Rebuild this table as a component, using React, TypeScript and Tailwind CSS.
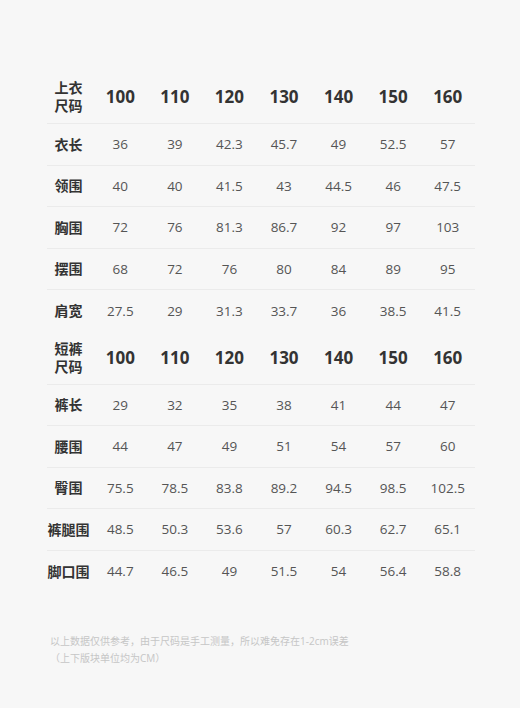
const sizes = ['100', '110', '120', '130', '140', '150', '160']

const topRows: [string, string[]][] = [
    ['衣长', ['36', '39', '42.3', '45.7', '49', '52.5', '57']],
    ['领围', ['40', '40', '41.5', '43', '44.5', '46', '47.5']],
    ['胸围', ['72', '76', '81.3', '86.7', '92', '97', '103']],
    ['摆围', ['68', '72', '76', '80', '84', '89', '95']],
    ['肩宽', ['27.5', '29', '31.3', '33.7', '36', '38.5', '41.5']],
]

const bottomRows: [string, string[]][] = [
    ['裤长', ['29', '32', '35', '38', '41', '44', '47']],
    ['腰围', ['44', '47', '49', '51', '54', '57', '60']],
    ['臀围', ['75.5', '78.5', '83.8', '89.2', '94.5', '98.5', '102.5']],
    ['裤腿围', ['48.5', '50.3', '53.6', '57', '60.3', '62.7', '65.1']],
    ['脚口围', ['44.7', '46.5', '49', '51.5', '54', '56.4', '58.8']],
]

const rowGrid = 'grid grid-cols-[46px_repeat(7,minmax(0,1fr))] items-center'

const HeaderRow = ({ label }: { label: [string, string] }) => (
    <div className={`${rowGrid} h-[53px] border-b border-[#ebebeb]`}>
        <div className="pr-[3px] text-center text-[14px] font-bold leading-[18px] text-[#333]">
            <div>{label[0]}</div>
            <div>{label[1]}</div>
        </div>
        {sizes.map((s) => (
            <div key={s} className="text-center text-[17px] font-bold text-[#333]">
                {s}
            </div>
        ))}
    </div>
)

const DataRow = ({ label, values, last }: { label: string; values: string[]; last?: boolean }) => (
    <div className={`${rowGrid} h-[41.5px] ${last ? '' : 'border-b border-[#ebebeb]'}`}>
        <div className="whitespace-nowrap pr-[3px] text-center text-[14px] font-bold text-[#333]">{label}</div>
        {values.map((v, i) => (
            <div key={i} className="text-center text-[13.5px] text-[#555]">
                {v}
            </div>
        ))}
    </div>
)

const App = () => {
    return (
        <div
            className="h-[708px] w-[520px] bg-[#f7f7f7] pl-[47px] pr-[45px] pt-[71px]"
            style={{ fontFamily: '"Open Sans", "Noto Sans CJK SC", sans-serif' }}
        >
            <HeaderRow label={['上衣', '尺码']} />
            {topRows.map(([l, v], i) => (
                <DataRow key={l} label={l} values={v} last={i === topRows.length - 1} />
            ))}
            <HeaderRow label={['短裤', '尺码']} />
            {bottomRows.map(([l, v], i) => (
                <DataRow key={l} label={l} values={v} last={i === bottomRows.length - 1} />
            ))}
            <div className="mt-[41px] pl-[3px] text-[10px] leading-[17px] text-[#c6c6c6]">
                <p>以上数据仅供参考，由于尺码是手工测量，所以难免存在1-2cm误差</p>
                <p>（上下版块单位均为CM）</p>
            </div>
        </div>
    )
}

export default App
